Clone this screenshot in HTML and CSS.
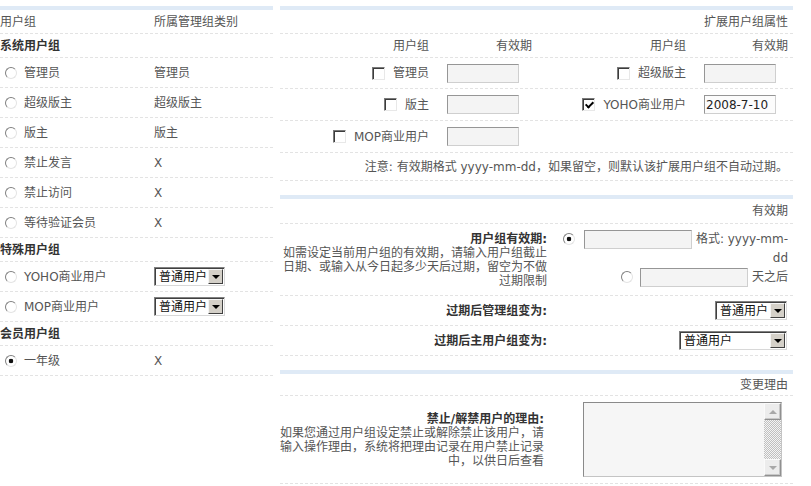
FILE: index.html
```html
<!DOCTYPE html>
<html lang="zh-CN">
<head>
<meta charset="utf-8">
<title>用户组设置</title>
<link rel="stylesheet" href="styles.css">
</head>
<body>
<div class="page">
  <section class="panel left">
    <div class="lrow head"><span class="lc1">用户组</span><span class="lc2">所属管理组类别</span></div>
    <div class="lrow group">系统用户组</div>
    <div class="lrow item"><label class="lc1"><input type="radio" class="radio" name="g">管理员</label><span class="lc2">管理员</span></div>
    <div class="lrow item"><label class="lc1"><input type="radio" class="radio" name="g">超级版主</label><span class="lc2">超级版主</span></div>
    <div class="lrow item"><label class="lc1"><input type="radio" class="radio" name="g">版主</label><span class="lc2">版主</span></div>
    <div class="lrow item"><label class="lc1"><input type="radio" class="radio" name="g">禁止发言</label><span class="lc2">X</span></div>
    <div class="lrow item"><label class="lc1"><input type="radio" class="radio" name="g">禁止访问</label><span class="lc2">X</span></div>
    <div class="lrow item"><label class="lc1"><input type="radio" class="radio" name="g">等待验证会员</label><span class="lc2">X</span></div>
    <div class="lrow group">特殊用户组</div>
    <div class="lrow item"><label class="lc1"><input type="radio" class="radio" name="g">YOHO商业用户</label><span class="lc2"><span class="select w71"><span class="sel-txt">普通用户</span><span class="sel-btn"></span></span></span></div>
    <div class="lrow item"><label class="lc1"><input type="radio" class="radio" name="g">MOP商业用户</label><span class="lc2"><span class="select w71"><span class="sel-txt">普通用户</span><span class="sel-btn"></span></span></span></div>
    <div class="lrow group">会员用户组</div>
    <div class="lrow item"><label class="lc1"><input type="radio" class="radio" name="g" checked>一年级</label><span class="lc2">X</span></div>
  </section>

  <div class="right">
    <section class="panel ext">
      <div class="rrow rhead h24">扩展用户组属性</div>
      <div class="rrow grid4 h24"><span class="lab">用户组</span><span class="hd">有效期</span><span class="lab">用户组</span><span class="hd">有效期</span></div>
      <div class="rrow grid4 h31">
        <label class="lab"><input type="checkbox" class="check">管理员</label><span class="inp"><input type="text" class="tinput"></span>
        <label class="lab"><input type="checkbox" class="check">超级版主</label><span class="inp"><input type="text" class="tinput"></span>
      </div>
      <div class="rrow grid4 h32">
        <label class="lab"><input type="checkbox" class="check">版主</label><span class="inp"><input type="text" class="tinput"></span>
        <label class="lab"><input type="checkbox" class="check" checked>YOHO商业用户</label><span class="inp"><input type="text" class="tinput filled" value="2008-7-10"></span>
      </div>
      <div class="rrow grid4 h32">
        <label class="lab"><input type="checkbox" class="check">MOP商业用户</label><span class="inp"><input type="text" class="tinput"></span>
        <span></span><span></span>
      </div>
      <div class="rrow rhead h28">注意: 有效期格式 yyyy-mm-dd，如果留空，则默认该扩展用户组不自动过期。</div>
    </section>

    <section class="panel expiry">
      <div class="rrow rhead h25">有效期</div>
      <div class="rrow split2 h72">
        <div class="desc"><b>用户组有效期:</b><br>如需设定当前用户组的有效期，请输入用户组截止日期、或输入从今日起多少天后过期，留空为不做过期限制</div>
        <div class="ctl lines"><input type="radio" class="radio r1" name="e" checked><input type="text" class="tinput w108">格式: yyyy-mm-<br>dd<br><input type="radio" class="radio r2" name="e"><input type="text" class="tinput w108">天之后</div>
      </div>
      <div class="rrow split2 h30">
        <div class="desc"><b>过期后管理组变为:</b></div>
        <div class="ctl"><span class="select w72"><span class="sel-txt">普通用户</span><span class="sel-btn"></span></span></div>
      </div>
      <div class="rrow split2 h30">
        <div class="desc"><b>过期后主用户组变为:</b></div>
        <div class="ctl"><span class="select w108"><span class="sel-txt">普通用户</span><span class="sel-btn"></span></span></div>
      </div>
    </section>

    <section class="panel reason">
      <div class="rrow rhead h22">变更理由</div>
      <div class="rrow split3 h88">
        <div class="desc"><b>禁止/解禁用户的理由:</b><br>如果您通过用户组设定禁止或解除禁止该用户，请输入操作理由，系统将把理由记录在用户禁止记录中，以供日后查看</div>
        <div class="ctl ta-cell">
          <span class="ta-box">
            <textarea class="ta"></textarea>
            <span class="sbar"><span class="sb-btn up"></span><span class="sb-track"></span><span class="sb-btn down"></span></span>
          </span>
        </div>
      </div>
    </section>
  </div>
</div>
</body>
</html>
```

FILE: styles.css
```css
* { box-sizing: border-box; }
html, body { margin: 0; padding: 0; background: #fff; }
body {
  font-family: "DejaVu Sans", "Noto Sans CJK SC", sans-serif;
  font-size: 12px;
  line-height: 14px;
  color: #555;
}
b { color: #333; font-weight: bold; }

.page { display: flex; align-items: flex-start; gap: 7px; padding-top: 6px; }
.panel { border-top: 4px solid #dfeaf6; }
.left { width: 273px; }
.right { width: 513px; display: flex; flex-direction: column; gap: 14px; }

/* left panel */
.lrow { display: flex; align-items: center; border-bottom: 1px dashed #e3e3e3; }
.lrow.head { height: 24px; }
.lrow.group { height: 24px; font-weight: bold; color: #333; }
.lrow.item { height: 30px; }
.lc1 { width: 154px; display: flex; align-items: center; }
.lc2 { flex: 1; display: flex; align-items: center; }
.lrow .radio { margin: 0 7px 0 5px; }

/* radio & checkbox */
.radio {
  appearance: none; -webkit-appearance: none;
  width: 12px; height: 12px; flex: none;
  border-radius: 50%;
  border: 1px solid; border-color: #808080 #e4e4e4 #e4e4e4 #808080;
  background: #fff;
  vertical-align: middle;
}
.radio:checked { background: radial-gradient(circle, #111 0 2px, #fff 2.6px); }
.check {
  appearance: none; -webkit-appearance: none;
  width: 13px; height: 13px; flex: none; margin: 0;
  border: 1px solid; border-color: #7a7a7a #e8e8e8 #e8e8e8 #7a7a7a;
  box-shadow: inset 1px 1px 0 #3c3c3c;
  background: #fff;
}
.check:checked::after {
  content: ""; display: block;
  width: 3px; height: 6px;
  margin: 1px 0 0 4px;
  border: solid #000; border-width: 0 2px 2px 0;
  transform: rotate(45deg);
}

/* text inputs */
.tinput {
  width: 72px; height: 19px; margin: 0;
  border: 1px solid; border-color: #969696 #cfcfcf #cfcfcf #969696;
  background: #f4f4f4;
  font: 12px "DejaVu Sans", sans-serif; color: #222;
  padding: 0 1px;
  vertical-align: middle;
}
.tinput.filled { background: #fcfcfc; }
.tinput.w108 { width: 108px; }

/* fake select */
.select {
  display: inline-flex; align-items: stretch;
  height: 19px; padding: 1px;
  border: 1px solid; border-color: #808080 #d8d8d8 #d8d8d8 #808080;
  box-shadow: inset 1px 1px 0 #404040;
  background: #fff; color: #111;
  vertical-align: middle;
}
.select.w71 { width: 71px; }
.select.w72 { width: 72px; }
.select.w108 { width: 108px; }
.sel-txt { flex: 1; padding: 1px 0 0 3px; display: flex; align-items: center; line-height: 14px; text-align: left; }
.sel-btn {
  width: 15px; flex: none;
  background: #d4d0c8;
  border: 1px solid; border-color: #f4f4f4 #404040 #404040 #f4f4f4;
  display: flex; align-items: center; justify-content: center;
}
.sel-btn::after {
  content: "";
  border-left: 4px solid transparent; border-right: 4px solid transparent;
  border-top: 4px solid #000;
}

/* right panels */
.rrow { border-bottom: 1px dashed #e3e3e3; }
.rhead { display: flex; align-items: center; justify-content: flex-end; padding-right: 5px; }
.h22 { height: 22px; } .h24 { height: 24px; } .h25 { height: 25px; } .h28 { height: 28px; }
.h30 { height: 30px; } .h31 { height: 31px; } .h32 { height: 32px; } .h72 { height: 72px; } .h88 { height: 88px; }

.grid4 { display: grid; grid-template-columns: 162px 95px 162px 94px; align-items: center; }
.lab { display: flex; justify-content: flex-end; align-items: center; gap: 8px; padding-right: 13px; }
.hd { text-align: right; padding-right: 5px; }
.inp { padding-left: 5px; display: flex; align-items: center; }

.split2 { display: grid; grid-template-columns: 272px 241px; align-items: center; }
.split3 { display: grid; grid-template-columns: 268px 245px; align-items: center; }
.desc { text-align: right; padding-right: 5px; }
.split3 .desc { padding-right: 4px; }
.ctl { text-align: right; padding-right: 6px; }
.lines { padding-right: 5px; line-height: 19px; margin-top: -3px; }
.lines .tinput { margin-right: 4px; }
.lines .r1 { margin: 0 9px 0 0; }
.lines .r2 { margin: 0 7px 0 0; }

/* textarea with classic scrollbar */
.ta-cell { padding-right: 11px; }
.ta-box {
  display: inline-flex; width: 199px; height: 75px;
  border: 1px solid; border-color: #8a8a8a #c4c4c4 #c4c4c4 #8a8a8a;
  background: #f6f6f6;
  vertical-align: middle;
}
.ta { flex: 1; border: none; margin: 0; padding: 2px; background: #f6f6f6; resize: none; font: 12px "DejaVu Sans", sans-serif; outline: none; }
.sbar { width: 17px; display: flex; flex-direction: column; }
.sb-btn {
  height: 17px; flex: none;
  background: #ececec;
  border: 1px solid; border-color: #fafafa #909090 #909090 #fafafa;
  box-shadow: inset -1px -1px 0 #c8c8c8;
  display: flex; align-items: center; justify-content: center;
}
.sb-btn.up::after { content: ""; border-left: 4px solid transparent; border-right: 4px solid transparent; border-bottom: 4px solid #a8a8a8; }
.sb-btn.down::after { content: ""; border-left: 4px solid transparent; border-right: 4px solid transparent; border-top: 4px solid #a8a8a8; }
.sb-track { flex: 1; background: repeating-conic-gradient(#c0c0c0 0 25%, #f4f4f4 0 50%) 0 0 / 2px 2px; }
```
